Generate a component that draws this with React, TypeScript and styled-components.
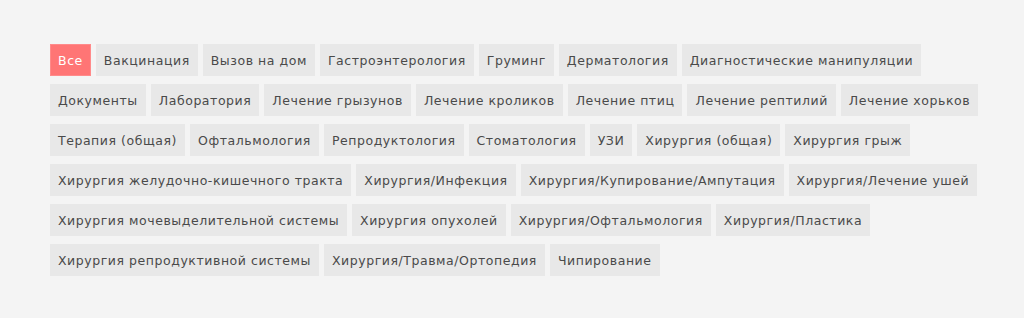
import styled, { createGlobalStyle } from "styled-components";

const GlobalStyle = createGlobalStyle`
    html, body {
        margin: 0;
        padding: 0;
        background: #f4f4f4;
    }
`;

const Page = styled.div`
    width: 1024px;
    height: 318px;
    box-sizing: border-box;
    padding: 44px 30px 0 50px;
`;

const Filters = styled.div`
    display: flex;
    flex-wrap: wrap;
    gap: 8px 5px;
`;

const FilterButton = styled.button<{ $active?: boolean }>`
    height: 32px;
    padding: 0 7px;
    border: 1px solid ${(p) => (p.$active ? "#ff8a8a" : "#e8e8e8")};
    background: ${(p) => (p.$active ? "#ff7575" : "#e8e8e8")};
    color: ${(p) => (p.$active ? "#ffffff" : "#4a4a4a")};
    font-family: "DejaVu Sans", sans-serif;
    font-size: 12.5px;
    letter-spacing: 0.55px;
    cursor: pointer;
    white-space: nowrap;
`;

const categories = [
    "Все",
    "Вакцинация",
    "Вызов на дом",
    "Гастроэнтерология",
    "Груминг",
    "Дерматология",
    "Диагностические манипуляции",
    "Документы",
    "Лаборатория",
    "Лечение грызунов",
    "Лечение кроликов",
    "Лечение птиц",
    "Лечение рептилий",
    "Лечение хорьков",
    "Терапия (общая)",
    "Офтальмология",
    "Репродуктология",
    "Стоматология",
    "УЗИ",
    "Хирургия (общая)",
    "Хирургия грыж",
    "Хирургия желудочно-кишечного тракта",
    "Хирургия/Инфекция",
    "Хирургия/Купирование/Ампутация",
    "Хирургия/Лечение ушей",
    "Хирургия мочевыделительной системы",
    "Хирургия опухолей",
    "Хирургия/Офтальмология",
    "Хирургия/Пластика",
    "Хирургия репродуктивной системы",
    "Хирургия/Травма/Ортопедия",
    "Чипирование",
];

export default function App() {
    return (
        <>
            <GlobalStyle />
            <Page>
                <Filters>
                    {categories.map((name, i) => (
                        <FilterButton key={name} $active={i === 0}>
                            {name}
                        </FilterButton>
                    ))}
                </Filters>
            </Page>
        </>
    );
}
